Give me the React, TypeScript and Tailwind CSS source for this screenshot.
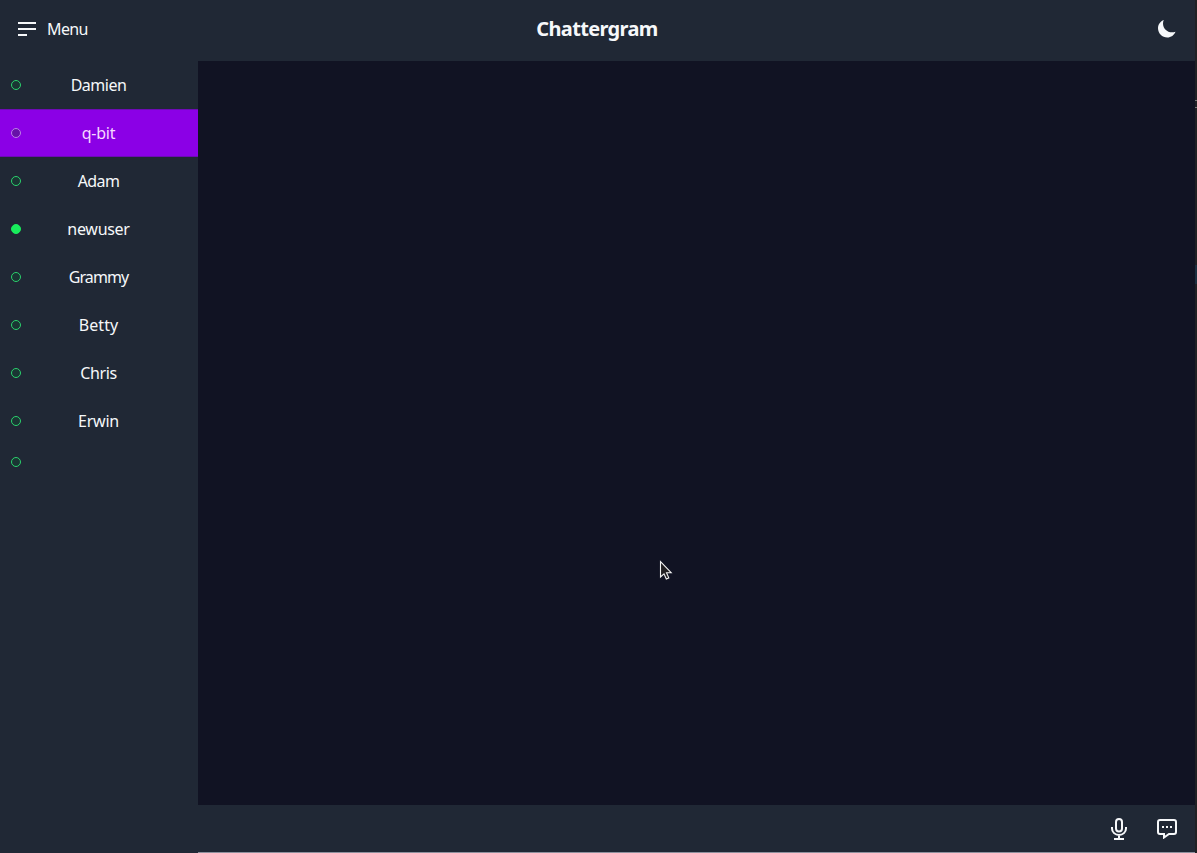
type User = { name: string; online?: boolean; active?: boolean; spacing: string };

const users: User[] = [
  { name: 'Damien', spacing: 'tracking-[-0.5px]' },
  { name: 'q-bit', active: true, spacing: 'tracking-[-0.2px]' },
  { name: 'Adam', spacing: 'tracking-[-0.6px]' },
  { name: 'newuser', online: true, spacing: 'tracking-[-0.3px]' },
  { name: 'Grammy', spacing: 'tracking-[-0.9px]' },
  { name: 'Betty', spacing: 'tracking-[0.1px]' },
  { name: 'Chris', spacing: 'tracking-[-0.4px]' },
  { name: 'Erwin', spacing: 'tracking-[-0.2px]' },
];

function StatusDot({ online, active }: { online?: boolean; active?: boolean }) {
  const tone = online
    ? 'border-[#18ed5c] bg-[#18ed5c]'
    : active
      ? 'border-[#bd7fe9] bg-[#6712a8]'
      : 'border-[#2bd26d] bg-[#1a3533]';
  return <span className={`block size-2.5 shrink-0 rounded-full border ${tone}`} />;
}

function UserRow({ user }: { user: User }) {
  return (
    <li
      className={`grid h-12 grid-cols-[11px_10px_1fr_22px] items-center ${
        user.active ? 'border-y border-[#6d0bb5] bg-[#8b00e6] text-[#f6d9ff]' : 'text-[#f6f8fa]'
      }`}
    >
      <span />
      <StatusDot online={user.online} active={user.active} />
      <span className={`text-center leading-6 ${user.spacing}`}>{user.name}</span>
      <span />
    </li>
  );
}

function MenuIcon() {
  return (
    <svg width="18" height="14" viewBox="0 0 18 14" fill="currentColor">
      <rect width="18" height="2" />
      <rect y="6" width="18" height="2" />
      <rect y="12" width="9" height="2" />
    </svg>
  );
}

function MoonIcon() {
  return (
    <svg width="18" height="18" viewBox="0 0 18 18" fill="currentColor">
      <path d="M5.8 0C2.4 1.3 0 4.5 0 8.3C0 13.4 4.2 17.5 9.3 17.5C13 17.5 16.2 15.1 17.5 11.7C16.4 12.1 15.2 12.3 14 12.3C9 12.3 5 8.3 5 3.4C5 2.2 5.3 1 5.8 0Z" />
    </svg>
  );
}

function MicIcon() {
  return (
    <svg width="16" height="22" viewBox="0 0 16 22" fill="none" stroke="currentColor" strokeWidth="2">
      <rect x="5" y="1" width="6" height="12.5" rx="3" />
      <path d="M1 9V10.5C1 14.2 4.1 17 8 17S15 14.2 15 10.5V9M8 17V21M3 21H13" />
    </svg>
  );
}

function ChatIcon() {
  return (
    <svg width="20" height="20" viewBox="0 0 20 20" fill="none" stroke="currentColor" strokeWidth="2">
      <path d="M3 1H17Q19 1 19 3V13Q19 15 17 15H12L7 18.5V15H3Q1 15 1 13V3Q1 1 3 1Z" />
      <path d="M5 8H7M9 8H11M13 8H15" />
    </svg>
  );
}

function Cursor() {
  return (
    <svg
      className="absolute top-[560px] left-[659px]"
      width="14"
      height="21"
      viewBox="0 0 14 21"
    >
      <path
        d="M1.5 1.5V17L5 13.8L7.3 19L9.8 17.9L7.5 12.7H12.2Z"
        fill="#211f22"
        stroke="#f4f4f4"
        strokeWidth="1.1"
      />
    </svg>
  );
}

export default function App() {
  return (
    <div className="relative flex h-[853px] w-[1197px] overflow-hidden bg-[#202835] font-['Noto_Sans',sans-serif] text-base text-[#f6f8fa]">
      <div className="flex min-w-0 flex-1 flex-col">
        <header className="grid h-[61px] shrink-0 grid-cols-[1fr_auto_1fr] items-center pb-[3px] pr-[19px] pl-[18px]">
          <button className="flex items-center gap-[11px] justify-self-start">
            <MenuIcon />
            <span className="leading-6 tracking-[-0.6px]">Menu</span>
          </button>
          <h1 className="text-xl leading-7 font-bold tracking-[-0.65px]">Chattergram</h1>
          <button className="justify-self-end">
            <MoonIcon />
          </button>
        </header>
        <div className="flex min-h-0 flex-1">
          <aside className="w-[198px] shrink-0">
            <ul>
              {users.map((user) => (
                <UserRow key={user.name} user={user} />
              ))}
              <li className="flex h-[34px] items-center pl-[11px]">
                <StatusDot />
              </li>
            </ul>
          </aside>
          <div className="flex min-w-0 flex-1 flex-col">
            <main className="flex-1 bg-[#111323]" />
            <footer className="flex h-12 shrink-0 items-center justify-end gap-[30px] border-b border-[#8e919e] pr-[18px]">
              <button>
                <MicIcon />
              </button>
              <button className="pt-px">
                <ChatIcon />
              </button>
            </footer>
          </div>
        </div>
      </div>
      <div className="flex w-[2px] shrink-0 flex-col bg-[#202124]">
        <div className="h-[100px]" />
        <div className="h-px bg-[#777777]" />
        <div className="h-[6px]" />
        <div className="h-px bg-[#777777]" />
        <div className="h-[157px]" />
        <div className="h-[19px] bg-[#1c3040]" />
      </div>
      <Cursor />
    </div>
  );
}
